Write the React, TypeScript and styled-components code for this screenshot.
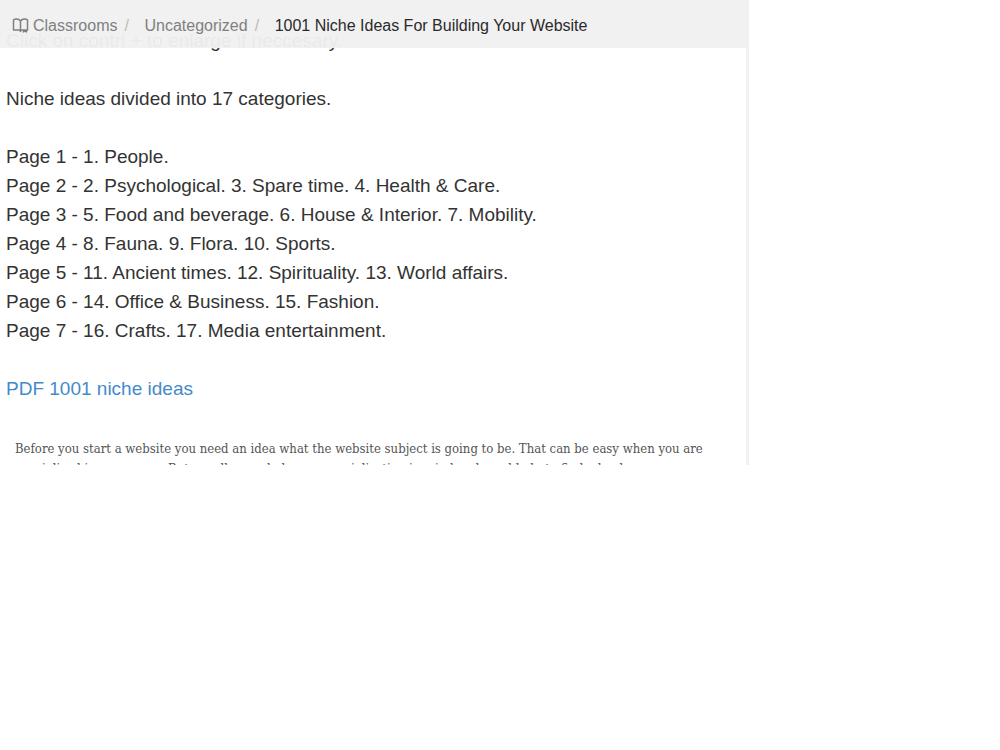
import React from "react";
import styled, { createGlobalStyle } from "styled-components";

const GlobalStyle = createGlobalStyle`
  * { box-sizing: border-box; }
  body {
    margin: 0;
    background: #fff;
    color: #333;
    font-family: "Liberation Sans", Arial, sans-serif;
  }
`;

const Panel = styled.div`
  position: relative;
  width: calc(75% - 1px);
  border-right: 3px solid #f1f1f1;
`;

const Header = styled.header`
  position: absolute;
  top: 0;
  left: 0;
  right: -3px;
  height: 48px;
  padding: 4px 12px 0;
  display: flex;
  align-items: center;
  background: rgba(240, 240, 240, 0.96);
`;

const Crumbs = styled.ol`
  display: flex;
  align-items: center;
  margin: 0;
  padding: 0;
  list-style: none;
  font-size: 16px;
  line-height: 20px;
  white-space: nowrap;
`;

const Crumb = styled.li`
  display: flex;
  align-items: center;
  color: #2a2a2a;

  &:not(:last-child)::after {
    content: "/";
    width: 20px;
    margin-left: 7px;
    color: #bbb;
  }
`;

const CrumbLink = styled.a`
  display: flex;
  align-items: center;
  gap: 4px;
  color: #808080;
  text-decoration: none;
`;

const Content = styled.main`
  padding: 26px 6px 0;
  font-size: 19px;
  line-height: 29px;
`;

const Paragraph = styled.p`
  margin: 0 0 29px;
`;

const PageList = styled.ul`
  margin: 0 0 29px;
  padding: 0;
  list-style: none;
`;

const DownloadLink = styled.a`
  color: #428bca;
  text-decoration: none;
`;

const Excerpt = styled.p`
  height: 33px;
  margin: 0;
  padding: 7px 9px 0;
  overflow: hidden;
  color: #555;
  font-family: "DejaVu Serif Condensed", Georgia, serif;
  font-size: 13px;
  line-height: 20px;
  white-space: nowrap;
`;

const BookIcon = () => (
  <svg width="17" height="16" viewBox="0 0 17 16" fill="none" stroke="#808080" strokeWidth="1.5" strokeLinejoin="round" aria-hidden="true">
    <path d="M8.500 3C7.500 1.500 6 1 4.500 1S2 1.500 1.500 2V12H7C8 12 8.500 12.500 8.500 13.500C8.500 12.500 9 12 10 12H15.500V2C15 1.500 14 1 12.500 1S9.500 1.500 8.500 3ZM8.500 3V12.500M11.500 12V14L13 13L14.500 14V12" />
  </svg>
);

const pages = [
  "Page 1 - 1. People.",
  "Page 2 - 2. Psychological. 3. Spare time. 4. Health & Care.",
  "Page 3 - 5. Food and beverage. 6. House & Interior. 7. Mobility.",
  "Page 4 - 8. Fauna. 9. Flora. 10. Sports.",
  "Page 5 - 11. Ancient times. 12. Spirituality. 13. World affairs.",
  "Page 6 - 14. Office & Business. 15. Fashion.",
  "Page 7 - 16. Crafts. 17. Media entertainment.",
];

export default function App() {
  return (
    <>
      <GlobalStyle />
      <Panel>
        <Content>
          <Paragraph>Click on contrl + to enlarge if neccesary.</Paragraph>
          <Paragraph>Niche ideas divided into 17 categories.</Paragraph>
          <PageList>
            {pages.map((page) => (
              <li key={page}>{page}</li>
            ))}
          </PageList>
          <Paragraph>
            <DownloadLink href="#pdf">PDF 1001 niche ideas</DownloadLink>
          </Paragraph>
          <Excerpt>
            Before you start a website you need an idea what the website subject is going to be. That can be easy when you are
            <br />
            specialized in some area. But usually you do have a specialization in mind and need help to find a hook
          </Excerpt>
        </Content>
        <Header>
          <nav aria-label="Breadcrumb">
            <Crumbs>
              <Crumb>
                <CrumbLink href="#classrooms">
                  <BookIcon />
                  Classrooms
                </CrumbLink>
              </Crumb>
              <Crumb>
                <CrumbLink href="#uncategorized">Uncategorized</CrumbLink>
              </Crumb>
              <Crumb aria-current="page">1001 Niche Ideas For Building Your Website</Crumb>
            </Crumbs>
          </nav>
        </Header>
      </Panel>
    </>
  );
}
